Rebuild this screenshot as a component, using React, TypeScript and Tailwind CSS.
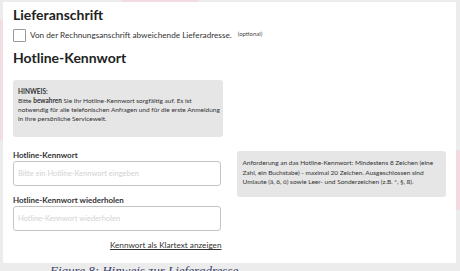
import React from "react";

const font = { fontFamily: "Lato, 'Open Sans', Arial, sans-serif" };

function Field({ label, placeholder }: { label: string; placeholder: string }) {
	return (
		<div className="flex flex-col">
			<label className="text-[8px] leading-[12px] font-bold text-[#333]">{label}</label>
			<input
				className="h-[25px] w-full rounded-[3px] border border-[#c4c4c4] bg-white px-[4px] text-[7.5px] text-[#333] outline-none placeholder:text-[#d2d2d2]"
				placeholder={placeholder}
				type="password"
			/>
		</div>
	);
}

export default function App() {
	return (
		<div className="relative h-[271px] w-[460px] overflow-hidden bg-[#ececec]" style={font}>
			{/* faint pink pattern of the page behind */}
			<div className="absolute -left-[30px] top-[20px] h-[120px] w-[60px] rounded-full bg-[#f3dde2]" />
			<div className="absolute left-[120px] -top-[20px] h-[30px] w-[80px] rounded-full bg-[#f1dde1]" />
			<div className="absolute right-[-20px] top-[150px] h-[60px] w-[40px] rounded-full bg-[#f2dbe0]" />

			<div className="relative flex flex-col pl-[3px] pt-[2px]">
				<div className="flex h-[261px] w-[453px] flex-col bg-white px-[10px] pt-[4px]">
					<h2 className="text-[14px] leading-[18px] font-bold text-[#222]">Lieferanschrift</h2>

					<label className="mt-[4px] flex items-center gap-[4px]">
						<span className="h-[13px] w-[13px] shrink-0 rounded-[1px] border border-[#9a9a9a] bg-white" />
						<span className="text-[8.2px] leading-[14px] text-[#333]">
							Von der Rechnungsanschrift abweichende Lieferadresse.
						</span>
						<span className="-mt-[3px] ml-[2px] text-[6px] leading-[8px] text-[#444]">(optional)</span>
					</label>

					<h2 className="mt-[7px] text-[14px] leading-[18px] font-bold text-[#222]">Hotline-Kennwort</h2>

					<div className="mt-[13px] w-[210px] rounded-[3px] bg-[#e6e6e6] pl-[5px] pr-[3px] pt-[7px] pb-[14px] text-[6.5px] leading-[9px] text-[#333]">
						<p className="font-bold">HINWEIS:</p>
						<p>
							Bitte <span className="font-bold">bewahren</span> Sie Ihr Hotline-Kennwort sorgfältig auf. Es ist
							<br />
							notwendig für alle telefonischen Anfragen und für die erste Anmeldung
							<br />
							in Ihre persönliche Servicewelt.
						</p>
					</div>

					<div className="mt-[12px] flex gap-[16px]">
						<div className="flex w-[209px] flex-col gap-[8px]">
							<Field label="Hotline-Kennwort" placeholder="Bitte ein Hotline-Kennwort eingeben" />
							<Field label="Hotline-Kennwort wiederholen" placeholder="Hotline-Kennwort wiederholen" />
							<a className="self-end text-[8.2px] leading-[12px] text-[#333] underline" href="#">
								Kennwort als Klartext anzeigen
							</a>
						</div>
						<div className="mt-[2px] h-[46px] w-[209px] self-start rounded-[3px] bg-[#e6e6e6] px-[5px] pt-[7px] text-[6.5px] leading-[9.5px] whitespace-nowrap text-[#333]">
							Anforderung an das Hotline-Kennwort: Mindestens 8 Zeichen (eine
							<br />
							Zahl, ein Buchstabe) - maximal 20 Zeichen. Ausgeschlossen sind
							<br />
							Umlaute (ä, ö, ü) sowie Leer- und Sonderzeichen (z.B. *, §, ß).
						</div>
					</div>
				</div>
				<p
					className="pl-[47px] pt-[1px] text-[13px] leading-[14px] italic text-[#3a3f6a]"
					style={{ fontFamily: "'Liberation Serif', serif" }}
				>
					Figure 8: Hinweis zur Lieferadresse
				</p>
			</div>
		</div>
	);
}
